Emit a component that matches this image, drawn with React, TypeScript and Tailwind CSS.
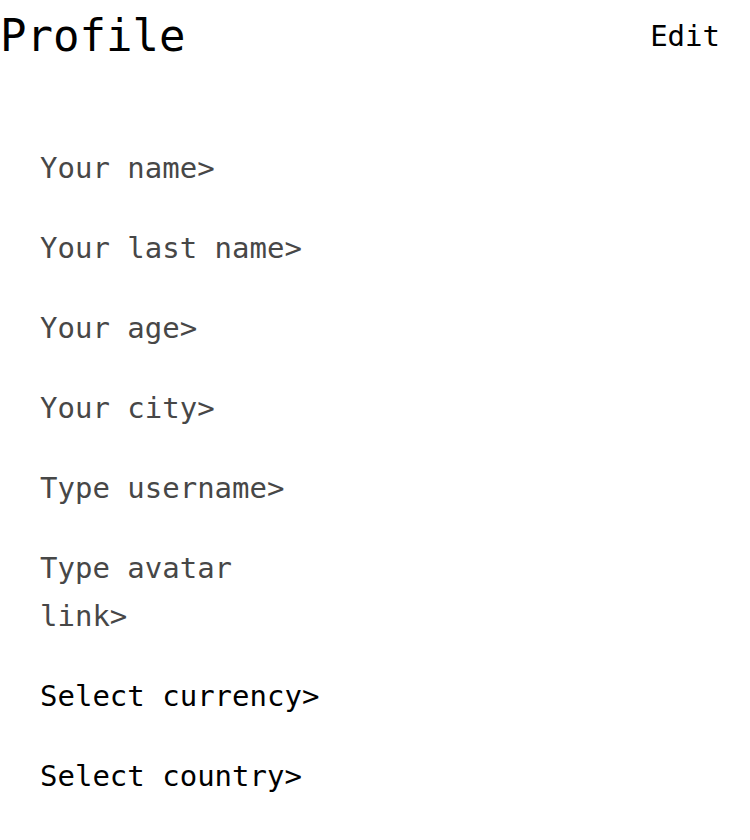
import React from "react";

const grayItems = [
  "Your name>",
  "Your last name>",
  "Your age>",
  "Your city>",
  "Type username>",
  "Type avatar link>",
];

const blackItems = ["Select currency>", "Select country>"];

export default function App() {
  return (
    <div
      className="min-h-[840px] w-[750px] bg-white text-black"
      style={{ fontFamily: '"DejaVu Sans Mono", monospace' }}
    >
      <header className="flex h-[72px] items-center justify-between pr-[30px]">
        <h1 className="text-[44px] leading-[72px] font-normal">Profile</h1>
        <button className="text-[29px] leading-[48px]">Edit</button>
      </header>
      <div className="mt-[72px] flex flex-col gap-8 pl-10">
        {grayItems.map((t) => (
          <div key={t} className="w-[270px] text-[29px] leading-[48px] text-[#474747]">
            {t}
          </div>
        ))}
        {blackItems.map((t) => (
          <div key={t} className="text-[29px] leading-[48px] text-black">
            {t}
          </div>
        ))}
      </div>
    </div>
  );
}
